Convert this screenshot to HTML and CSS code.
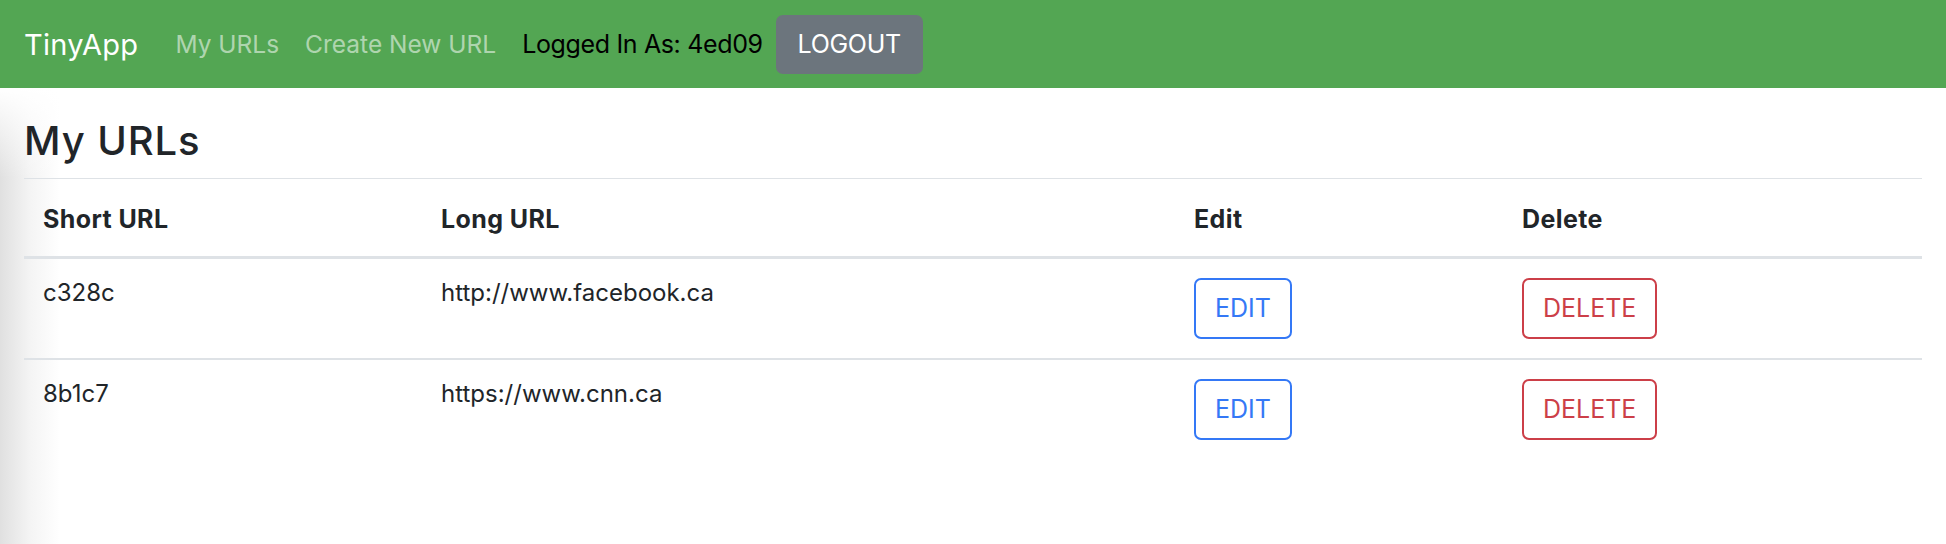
FILE: index.html
```html
<!DOCTYPE html>
<html lang="en">
<head>
<meta charset="utf-8">
<title>TinyApp</title>
<link rel="stylesheet" href="styles.css">
</head>
<body>
<nav class="navbar">
  <a class="brand" href="#">TinyApp</a>
  <a class="nav-link" href="#">My URLs</a>
  <a class="nav-link" href="#">Create New URL</a>
  <span class="user">Logged In As: 4ed09</span>
  <button class="btn-logout" type="button">LOGOUT</button>
</nav>
<main class="main">
  <h1 class="title">My URLs</h1>
  <table class="table">
    <thead>
      <tr>
        <th class="col-short">Short URL</th>
        <th class="col-long">Long URL</th>
        <th class="col-edit">Edit</th>
        <th class="col-delete">Delete</th>
      </tr>
    </thead>
    <tbody>
      <tr>
        <td>c328c</td>
        <td>http://www.facebook.ca</td>
        <td><button class="btn btn-edit" type="button">EDIT</button></td>
        <td><button class="btn btn-delete" type="button">DELETE</button></td>
      </tr>
      <tr class="last">
        <td>8b1c7</td>
        <td>https://www.cnn.ca</td>
        <td><button class="btn btn-edit" type="button">EDIT</button></td>
        <td><button class="btn btn-delete" type="button">DELETE</button></td>
      </tr>
    </tbody>
  </table>
</main>
</body>
</html>
```
FILE: styles.css
```css
* { box-sizing: border-box; }

html, body {
  margin: 0;
  padding: 0;
  height: 100%;
  background: #fff;
  font-family: "Inter", "Helvetica Neue", Arial, sans-serif;
  color: #212529;
}

.navbar {
  display: flex;
  align-items: center;
  height: 88px;
  padding: 0 24px;
  background: #53a653;
}

.brand {
  font-size: 29px;
  color: #fff;
  text-decoration: none;
  margin-right: 37px;
  letter-spacing: 0.3px;
}

.nav-link {
  font-size: 24.5px;
  color: rgba(255, 255, 255, 0.55);
  text-decoration: none;
  margin-right: 26px;
}

.nav-link + .nav-link {
  margin-right: 26px;
}

.user {
  font-size: 25px;
  color: #000;
  margin-right: 13px;
  letter-spacing: -0.35px;
}

.btn-logout {
  width: 147px;
  height: 59px;
  border: none;
  border-radius: 7px;
  background: #6c757d;
  color: #fff;
  font-family: inherit;
  font-size: 25px;
  padding: 0;
  letter-spacing: -0.3px;
}

.main {
  min-height: calc(100% - 88px);
  padding: 0 24px;
  background:
    linear-gradient(to bottom, #fff 0, rgba(255, 255, 255, 0) 90px),
    linear-gradient(to right, #e0e0e0 0, #f4f4f4 30px, #fff 60px);
  overflow: hidden;
}

.title {
  margin: 29px 0 13px;
  font-size: 40px;
  font-weight: 500;
  line-height: 48px;
  letter-spacing: 0.9px;
}

.table {
  width: 100%;
  table-layout: fixed;
  border-collapse: collapse;
  border-top: 1px solid #dee2e6;
  font-size: 24px;
  line-height: 30px;
}

.table th,
.table td {
  text-align: left;
  vertical-align: top;
}

.table th {
  padding: 25px 19px 22px;
  font-size: 25px;
  font-weight: 700;
  letter-spacing: 0.4px;
  border-bottom: 3px solid #dee2e6;
}

.table td {
  padding: 19px;
  border-bottom: 2px solid #dee2e6;
}

.table tr.last td {
  border-bottom: none;
}

.col-short { width: 398px; }
.col-long { width: 753px; }
.col-edit { width: 328px; }

.btn {
  display: inline-block;
  vertical-align: top;
  background: transparent;
  border: 2px solid;
  border-radius: 7px;
  padding: 11px 19px;
  font-family: inherit;
  font-size: 25px;
  line-height: 35px;
}

.btn-edit {
  color: #3478f6;
  border-color: #3478f6;
}

.btn-delete {
  color: #cc3f48;
  border-color: #cc3f48;
}
```
